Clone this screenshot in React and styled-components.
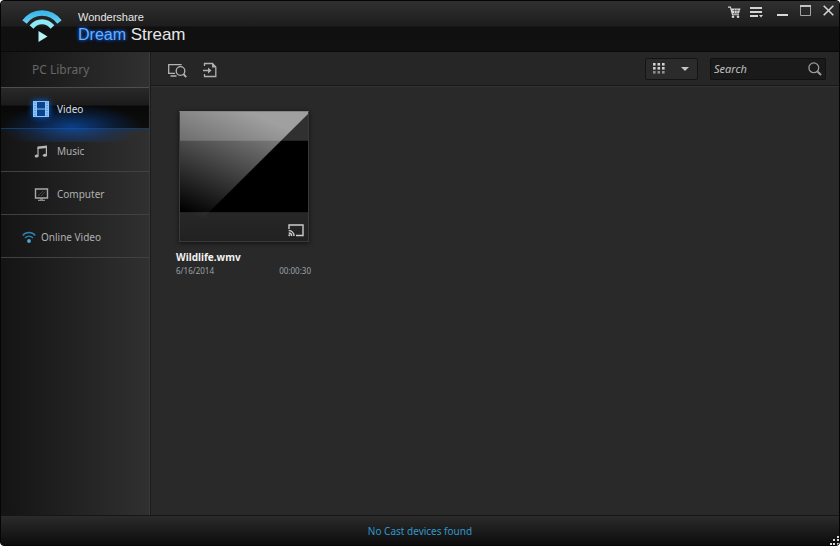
import React, { useState } from 'react';
import styled, { createGlobalStyle, css } from 'styled-components';

const libraryItems = [
    { id: 'video', label: 'Video', icon: FilmIcon },
    { id: 'music', label: 'Music', icon: MusicIcon },
    { id: 'computer', label: 'Computer', icon: ComputerIcon },
    { id: 'online', label: 'Online Video', icon: OnlineIcon, outer: true },
];

const videos = [
    { name: 'Wildlife.wmv', date: '6/16/2014', length: '00:00:30' },
];

export default function App() {
    const [active, setActive] = useState('video');
    const [query, setQuery] = useState('');

    return (
        <>
            <GlobalStyle />
            <Window>
                <Header>
                    <Brand>
                        <Logo />
                        <BrandText>
                            <Company>Wondershare</Company>
                            <Product><span>Dream</span> Stream</Product>
                        </BrandText>
                    </Brand>
                    <WindowButtons>
                        <button aria-label="Store"><CartIcon /></button>
                        <button aria-label="Menu"><MenuIcon /></button>
                        <button aria-label="Minimize"><MinimizeIcon /></button>
                        <button aria-label="Maximize"><MaximizeIcon /></button>
                        <button aria-label="Close"><CloseIcon /></button>
                    </WindowButtons>
                </Header>

                <Body>
                    <Sidebar>
                        <SidebarTitle>PC Library</SidebarTitle>
                        <nav>
                            {libraryItems.map(({ id, label, icon: Icon, outer }) => (
                                <NavButton
                                    key={id}
                                    $active={active === id}
                                    $outer={outer}
                                    onClick={() => setActive(id)}
                                >
                                    <Icon />
                                    <span>{label}</span>
                                </NavButton>
                            ))}
                        </nav>
                    </Sidebar>

                    <Main>
                        <Toolbar>
                            <ToolButton aria-label="Scan computer"><ScanIcon /></ToolButton>
                            <ToolButton aria-label="Import file"><ImportIcon /></ToolButton>
                            <ViewButton aria-label="View mode">
                                <GridIcon />
                                <ArrowIcon />
                            </ViewButton>
                            <SearchBox>
                                <input
                                    type="text"
                                    aria-label="Search"
                                    placeholder="Search"
                                    value={query}
                                    onChange={(e) => setQuery(e.target.value)}
                                />
                                <button aria-label="Start search"><SearchIcon /></button>
                            </SearchBox>
                        </Toolbar>
                        <Library>
                            {videos.map((video) => (
                                <Card key={video.name}>
                                    <Thumb>
                                        <Gloss />
                                        <CastButton aria-label="Cast"><CastIcon /></CastButton>
                                    </Thumb>
                                    <CardName>{video.name}</CardName>
                                    <CardMeta>
                                        <span>{video.date}</span>
                                        <span>{video.length}</span>
                                    </CardMeta>
                                </Card>
                            ))}
                        </Library>
                    </Main>
                </Body>

                <Footer>
                    No Cast devices found
                    <Grip />
                </Footer>
            </Window>
        </>
    );
}

function Logo() {
    return (
        <svg width="40" height="34" viewBox="0 0 40 34" fill="none">
            <defs>
                <linearGradient id="arc" x1="0" y1="0" x2="0" y2="1">
                    <stop offset="0" stopColor="#3cb8ea" />
                    <stop offset="1" stopColor="#63cdf0" />
                </linearGradient>
            </defs>
            <path d="M2.500 13C7 7 13 4 20 4S33 7 37.500 13" stroke="url(#arc)" strokeWidth="5.500" />
            <path d="M9.500 18C12.500 14.500 16 12.800 20 12.800S27.500 14.500 30.500 18" stroke="#8ce9f5" strokeWidth="5" />
            <path d="M16.500 22L25.500 27.500L16.500 33Z" fill="#b4f4f2" />
        </svg>
    );
}

function CartIcon() {
    return (
        <svg width="13" height="12" viewBox="0 0 13 12" fill="#d6d6d6">
            <path d="M0 0.500H2.800L3.400 2.500H12.500L11 7.500H4.600L4.800 8.300H11V9.300H4L2 1.700H0Z" />
            <path d="M4.500 4.500H11.500M6.500 3V7M9 3V7" stroke="#2a2a2a" strokeWidth="0.500" />
            <circle cx="5" cy="10.700" r="1.300" />
            <circle cx="10" cy="10.700" r="1.300" />
        </svg>
    );
}

function MenuIcon() {
    return (
        <svg width="13" height="11" viewBox="0 0 13 11" fill="#d4d4d4">
            <path d="M0 0H12V2H0ZM0 4H12V6H0ZM0 8H8V10H0ZM9 8H13L11 10.500Z" />
        </svg>
    );
}

function MinimizeIcon() {
    return (
        <svg width="11" height="10" viewBox="0 0 11 10" fill="#d8d8d8">
            <path d="M0 8H11V10H0Z" />
        </svg>
    );
}

function MaximizeIcon() {
    return (
        <svg width="11" height="11" viewBox="0 0 11 11" fill="none" stroke="#a4a4a4">
            <path d="M0.500 1V10.500H10.500V1" />
            <path d="M0 1H11" stroke="#c4c4c4" strokeWidth="2" />
        </svg>
    );
}

function CloseIcon() {
    return (
        <svg width="11" height="11" viewBox="0 0 11 11" fill="none" stroke="#d4d4d4" strokeWidth="1.600">
            <path d="M0.700 0.700L10.300 10.300M10.300 0.700L0.700 10.300" />
        </svg>
    );
}

function FilmIcon() {
    return (
        <svg className="glow" width="16" height="16" viewBox="0 0 16 16">
            <path d="M0 0H16V16H0Z" fill="#8cc4f8" />
            <path d="M4 1H12V7.400H4ZM4 8.600H12V15H4Z" fill="#0c438f" />
            <path d="M2 1.500V15M14 1.500V15" stroke="#3a78c4" strokeWidth="1" strokeDasharray="1 1.500" />
        </svg>
    );
}

function MusicIcon() {
    return (
        <svg width="16" height="14" viewBox="0 0 16 14" fill="#b5b5b5">
            <path d="M4.500 2.500L14 1.500V4L4.500 5Z" />
            <path d="M5 3.500V12M13.400 2V11" stroke="#b5b5b5" strokeWidth="1.200" />
            <ellipse cx="3.600" cy="12" rx="2" ry="1.500" />
            <ellipse cx="11.900" cy="11.200" rx="2" ry="1.500" />
        </svg>
    );
}

function ComputerIcon() {
    return (
        <svg width="16" height="14" viewBox="0 0 16 14" fill="none" stroke="#a8a8a8">
            <path d="M2.500 2H14.500V11H2.500Z" strokeWidth="1.400" />
            <path d="M5 13.300H12M7 12H10" />
            <path d="M5 9L10 4M8 9L12.500 4.500" stroke="#454545" />
        </svg>
    );
}

function OnlineIcon() {
    return (
        <svg width="14" height="12" viewBox="0 0 14 12" fill="none" stroke="#2a83ae" strokeWidth="1.400">
            <path d="M0.700 4.500C4 0.500 10 0.500 13.300 4.500" />
            <path d="M3 7C5.200 4.500 8.800 4.500 11 7" />
            <circle cx="7" cy="10" r="1.900" fill="#4aa9d3" stroke="none" />
        </svg>
    );
}

function ScanIcon() {
    return (
        <svg width="19" height="15" viewBox="0 0 19 15" fill="none" stroke="#b4b4b4" strokeWidth="1.300">
            <path d="M13 2.200V1.600H0.700V10.400H7M2.500 13H8.500" />
            <circle cx="12.500" cy="8" r="4.300" />
            <path d="M15.500 11.200L18.200 14.200" strokeWidth="1.800" />
        </svg>
    );
}

function ImportIcon() {
    return (
        <svg width="14" height="16" viewBox="0 0 14 16" fill="none" stroke="#b0b0b0" strokeWidth="1.300">
            <path d="M1.500 4V1.500H9.500L12.800 5V14.500H1.500V12" />
            <path d="M9 1V5.500H13Z" fill="#b0b0b0" stroke="none" />
            <path d="M0 8.500H6" strokeWidth="1.600" />
            <path d="M5 5.500L8.500 8.500L5 11.500Z" fill="#b0b0b0" stroke="none" />
        </svg>
    );
}

function GridIcon() {
    return (
        <svg width="12" height="11" viewBox="0 0 12 11" fill="#d0d0d0">
            {[0, 4, 8].map((y) => [0, 4.500, 9].map((x) => (
                <rect key={`${x}-${y}`} x={x} y={y} width="2.600" height="2.600" opacity={y === 8 ? 0.6 : 1} />
            )))}
        </svg>
    );
}

function ArrowIcon() {
    return (
        <svg width="8" height="4" viewBox="0 0 8 4" fill="#c4c4c4">
            <path d="M0 0H8L4 4Z" />
        </svg>
    );
}

function SearchIcon() {
    return (
        <svg width="14" height="14" viewBox="0 0 14 14" fill="none" stroke="#9c9c9c" strokeWidth="1.300">
            <circle cx="5.800" cy="5.800" r="4.900" />
            <path d="M9.500 9.500L13 13" strokeWidth="2" />
        </svg>
    );
}

function CastIcon() {
    return (
        <svg width="16" height="13" viewBox="0 0 16 13" fill="none" stroke="#cccccc" strokeWidth="1.400">
            <path d="M1 5V1H15V11.500H8" />
            <path d="M0.700 6.500A5.300 5.300 0 0 1 6 12M0.700 9A3 3 0 0 1 3.700 12" />
            <circle cx="1.300" cy="11.300" r="1" fill="#cccccc" stroke="none" />
        </svg>
    );
}

// black frame with the diagonal shine that runs down into the card's foot
function Gloss() {
    return (
        <svg viewBox="0 0 128 130" preserveAspectRatio="none">
            <defs>
                <linearGradient id="shine" gradientUnits="userSpaceOnUse" x1="22" y1="108" x2="68" y2="0">
                    <stop offset="0" stopColor="#fff" stopOpacity="0" />
                    <stop offset="0.700" stopColor="#fff" stopOpacity="0.380" />
                    <stop offset="1" stopColor="#fff" stopOpacity="0.540" />
                </linearGradient>
            </defs>
            <path d="M0 29H128V101H0Z" fill="#000" />
            <path d="M0 0H128V2L0 130Z" fill="url(#shine)" />
        </svg>
    );
}

function Grip() {
    return (
        <GripSvg width="9" height="9" viewBox="0 0 9 9" fill="#d8d8d8">
            <path d="M7 0H9V2H7ZM3 3H5V5H3ZM7 3H9V5H7ZM0 7H2V9H0ZM3 7H5V9H3ZM7 7H9V9H7Z" />
        </GripSvg>
    );
}

const GlobalStyle = createGlobalStyle`
    * {
        box-sizing: border-box;
    }

    body {
        margin: 0;
        background-color: #ffffff;
        font-family: "Noto Sans", sans-serif;
        font-size: 10px;
    }

    button {
        display: flex;
        align-items: center;
        padding: 0;
        border: none;
        background: none;
        font: inherit;
        cursor: pointer;
    }

    svg {
        display: block;
        flex: none;
    }
`;

const Window = styled.div`
    display: flex;
    flex-direction: column;
    min-height: 100vh;
    border: 1px solid #050505;
    border-radius: 4px;
    background-color: #292929;
    overflow: hidden;
`;

const Header = styled.header`
    display: flex;
    justify-content: space-between;
    align-items: flex-start;
    height: 51px;
    padding: 0 5px 0 21px;
    background: linear-gradient(#303030 0, #1d1d1d 25px, #101010 26px, #111111 100%);
    border-bottom: 1px solid #090909;
`;

const Brand = styled.div`
    display: flex;
    gap: 16px;
    padding-top: 8px;
    font-family: "Liberation Sans", Arial, sans-serif;
`;

const BrandText = styled.div`
    padding-top: 1px;
    color: #e6e6e6;
`;

const Company = styled.div`
    font-size: 11px;
    line-height: 14px;
`;

const Product = styled.div`
    font-size: 17px;
    line-height: 22px;

    span {
        color: #68aef8;
        font-size: 16px;
        text-shadow: 0 0 4px #0a54d0, 0 0 3px #0a54d0;
    }
`;

const WindowButtons = styled.div`
    display: flex;
    align-items: center;
    gap: 12px;
    height: 22px;

    button {
        height: 20px;
    }

    button:nth-child(1) {
        margin-right: -3px;
    }

    button:nth-child(2) {
        margin-right: 2px;
    }

    button:nth-child(n + 3) {
        padding-bottom: 3px;
    }
`;

const Body = styled.div`
    display: flex;
    flex: 1;
`;

const Sidebar = styled.aside`
    width: 149px;
    background: linear-gradient(90deg, #141414, #303030);
    border-right: 1px solid #3a3a3a;
`;

const SidebarTitle = styled.h2`
    height: 36px;
    margin: 0;
    padding-left: 31px;
    color: #676767;
    font-size: 12px;
    font-weight: 400;
    line-height: 36px;
    border-bottom: 1px solid #4e4e4e;
`;

const NavButton = styled.button`
    && {
        position: relative;
        gap: 8px;
        width: 100%;
        height: 43px;
        padding: 2px 0 0 32px;
        border-bottom: 1px solid #414141;
        color: #b0b0b0;
    }

    ${({ $outer }) => $outer && css`
        && {
            gap: 5px;
            padding-left: 21px;
        }
    `}

    ${({ $active }) => $active && css`
        && {
            height: 41px;
            color: #dcdcdc;
            border-bottom-color: #123a6c;
            background: linear-gradient(#292929 0, #1b1b1b 17px, #080808 18px, #0d0d0d 100%);
        }

        &::before {
            content: "";
            position: absolute;
            inset: 8px 0 -14px;
            background: radial-gradient(ellipse 70px 23px at 48% 31px, #0a5cd0a0, #0a4cb040 60%, transparent);
            pointer-events: none;
        }
    `}

    svg,
    span {
        position: relative;
    }

    .glow {
        filter: drop-shadow(0 0 3px #0869e8);
    }
`;

const Main = styled.main`
    display: flex;
    flex-direction: column;
    flex: 1;
    min-width: 0;
    border-left: 1px solid #1c1c1c;
`;

const Toolbar = styled.div`
    display: flex;
    align-items: center;
    height: 34px;
    padding: 0 13px 0 17px;
    background-color: #262626;
    border-bottom: 1px solid #171717;
    box-shadow: 0 1px #333333;
`;

const ToolButton = styled.button`
    && {
        height: 24px;
        margin-right: 16px;
        padding-top: 3px;
    }
`;

const ViewButton = styled.button`
    && {
        gap: 16px;
        height: 22px;
        margin-left: auto;
        margin-right: 12px;
        padding: 0 8px 0 7px;
        border: 1px solid #141414;
        border-radius: 2px;
        background-color: #2b2b2b;
    }
`;

const SearchBox = styled.div`
    display: flex;
    align-items: center;
    width: 116px;
    height: 22px;
    padding: 0 3px;
    border: 1px solid #111111;
    border-radius: 2px;
    background-color: #1a1a1a;

    input {
        flex: 1;
        min-width: 0;
        padding: 0;
        border: none;
        outline: none;
        background: none;
        color: #d0d0d0;
        font: italic 11px "Noto Sans", sans-serif;

        &::placeholder {
            color: #c0c0c0;
            opacity: 1;
        }
    }
`;

const Library = styled.div`
    display: flex;
    flex-wrap: wrap;
    align-content: flex-start;
    gap: 24px;
    flex: 1;
    padding: 25px;
`;

const Card = styled.article`
    width: 135px;
`;

const Thumb = styled.div`
    display: grid;
    height: 131px;
    margin: 0 2px 0 3px;
    border: 1px solid #3a3a3a;
    border-top-color: #858585;
    background: linear-gradient(#303030 0, #303030 100px, #272727 101px, #212121 100%);
    box-shadow: 0 1px 4px #101010;

    > * {
        grid-area: 1 / 1;
    }

    > svg {
        width: 100%;
        height: 100%;
    }
`;

const CastButton = styled.button`
    place-self: end;

    && {
        padding: 0 4px 4px 0;
    }
`;

const CardName = styled.h3`
    margin: 7px 0 0;
    color: #f2f2f2;
    font-size: 10px;
    font-weight: 700;
    line-height: 16px;
`;

const CardMeta = styled.div`
    display: flex;
    justify-content: space-between;
    color: #9aa2a8;
    font-size: 8px;
    line-height: 11px;
`;

const Footer = styled.footer`
    position: relative;
    height: 30px;
    border-top: 1px solid #161616;
    background: linear-gradient(#2b2b2b, #0c0c0c);
    color: #3197ca;
    line-height: 30px;
    text-align: center;
`;

const GripSvg = styled.svg`
    position: absolute;
    right: 0;
    bottom: 0;
`;
